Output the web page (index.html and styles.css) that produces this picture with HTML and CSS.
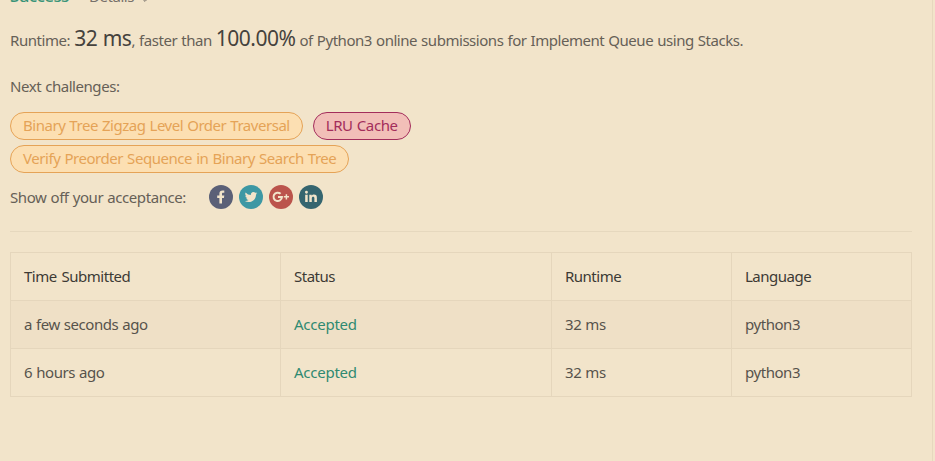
FILE: index.html
```html
<!DOCTYPE html>
<html lang="en">
<head>
<meta charset="utf-8">
<title>Submission result</title>
<link rel="stylesheet" href="styles.css">
</head>
<body>
<main class="panel">
  <div class="result"><span class="success">Success</span><span class="details">Details</span><svg class="chevron" viewBox="0 0 8 8"><path d="M0.8 4.2 4 7.4 7.2 4.2"/></svg></div>
  <p class="summary"><span class="lead">Runtime: </span><span class="big">32 ms</span><span class="faster">, faster than </span><span class="big">100.00%</span><span class="rest"> of Python3 online submissions for Implement Queue using Stacks.</span></p>
  <p class="next">Next challenges:</p>
  <div class="tags">
    <a class="tag medium zigzag">Binary Tree Zigzag Level Order Traversal</a>
    <a class="tag hard">LRU Cache</a>
    <a class="tag medium verify">Verify Preorder Sequence in Binary Search Tree</a>
  </div>
  <div class="share">
    <span class="share-label">Show off your acceptance:</span>
    <svg class="social" viewBox="0 0 24 24"><circle cx="12" cy="12" r="12" fill="#5b6077"/><path class="mark" d="M10.4 18.5v-5.6H8.2v-2.4h2.2V8.7c0-2 1.2-3.2 3.1-3.2h1.8v2.3h-1.2c-.8 0-1.1.4-1.1 1.1v1.6h2.3l-.4 2.4H13v5.6z"/></svg>
    <svg class="social" viewBox="0 0 24 24"><circle cx="12" cy="12" r="12" fill="#3d98a4"/><path class="mark" transform="translate(5.8 5.8) scale(.52)" d="M23.95 4.57a10 10 0 0 1-2.82.77 4.96 4.96 0 0 0 2.16-2.72 9.99 9.99 0 0 1-3.12 1.19 4.92 4.92 0 0 0-8.38 4.48A13.98 13.98 0 0 1 1.64 3.16a4.92 4.92 0 0 0 1.52 6.57 4.9 4.9 0 0 1-2.23-.61v.06a4.92 4.92 0 0 0 3.95 4.83 5 5 0 0 1-2.21.08 4.94 4.94 0 0 0 4.6 3.42A9.87 9.87 0 0 1 0 19.54a14 14 0 0 0 7.55 2.21c9.14 0 14.31-7.72 14.01-14.64a10 10 0 0 0 2.39-2.54z"/></svg>
    <svg class="social" viewBox="0 0 24 24"><circle cx="12" cy="12" r="12" fill="#bb544c"/><path class="line" d="M11.6 8.8A4.2 4.2 0 1 0 12.9 12.1H9"/><path class="line plus" d="M14.8 11.8h5.2M17.4 9.2v5.2"/></svg>
    <svg class="social" viewBox="0 0 24 24"><circle cx="12" cy="12" r="12" fill="#35656f"/><path class="mark" d="M6.2 9.8h2.5v7.3H6.2zM7.45 5.8a1.45 1.45 0 1 1 0 2.9 1.45 1.45 0 0 1 0-2.9zM10.3 9.8h2.4v1c.4-.7 1.2-1.2 2.3-1.2 2.1 0 2.9 1.2 2.9 3.2v4.3h-2.5v-3.8c0-1-.3-1.6-1.2-1.6-1 0-1.4.7-1.4 1.6v3.8h-2.5z"/></svg>
  </div>
  <hr class="rule">
  <table class="table">
    <colgroup><col class="w-time"><col class="w-status"><col class="w-run"><col class="w-lang"></colgroup>
    <thead><tr><th>Time Submitted</th><th>Status</th><th>Runtime</th><th>Language</th></tr></thead>
    <tbody>
      <tr class="shade"><td>a few seconds ago</td><td class="accepted">Accepted</td><td>32 ms</td><td>python3</td></tr>
      <tr><td>6 hours ago</td><td class="accepted">Accepted</td><td>32 ms</td><td>python3</td></tr>
    </tbody>
  </table>
</main>
</body>
</html>
```
FILE: styles.css
```css
* { box-sizing: border-box; }
body { margin: 0; background: #f2e4ca; color: #666057; font: 15px/20px "Noto Sans", "Open Sans", sans-serif; letter-spacing: -.45px; word-spacing: .6px; overflow: hidden; }
p { margin: 0; }
.panel { display: flow-root; width: 933px; height: 461px; padding: 0 20px 0 10px; border-right: 1px solid #e6d8be; white-space: nowrap; }
.result { display: flex; height: 24px; margin-top: -14px; line-height: 20px; }
.success { color: #3a9478; font-size: 17px; font-weight: 500; letter-spacing: -.6px; width: 79px; }
.details { color: #77706a; }
.chevron { width: 8px; height: 8px; margin: 8px 0 0 7px; fill: none; stroke: #77706a; }
.summary { height: 30px; margin-top: 13px; line-height: 30px; }
.big { color: #45423d; font-size: 21px; letter-spacing: -.5px; }
.rest { letter-spacing: -.46px; }
.next { margin-top: 23px; }
.tags { display: flex; flex-wrap: wrap; gap: 5px 10px; width: 430px; margin-top: 16px; }
.tag { height: 28px; padding: 0 12px; border: 1px solid; border-radius: 14px; line-height: 24px; }
.zigzag { letter-spacing: -.47px; }
.medium { color: #e5a357; background: #fcdfb2; }
.hard { color: #a32d5b; background: #f2bfb8; letter-spacing: -.4px; }
.share { display: flex; align-items: center; height: 24px; margin-top: 12px; gap: 6px; }
.share-label { width: 193px; letter-spacing: -.42px; }
.social { width: 24px; height: 24px; }
.mark { fill: #f2e4ca; }
.line { fill: none; stroke: #f2e4ca; stroke-width: 2; }
.plus { stroke-width: 1.5; }
.rule { height: 1px; margin: 22px 0 20px; border: 0; background: #e6d8be; }
.table { width: 902px; table-layout: fixed; border-collapse: collapse; }
.w-time { width: 270px; }
.w-status { width: 271px; }
.w-run, .w-lang { width: 180px; }
th, td { height: 48px; padding: 0 13px 2px; border: 1px solid #e5d6bc; text-align: left; font-weight: 400; }
th { color: #3d3a35; letter-spacing: -.5px; word-spacing: 1.5px; }
td { color: #57534c; }
.shade { background: #efe0c6; }
.table .accepted { color: #2f8a71; letter-spacing: -.25px; }
```
